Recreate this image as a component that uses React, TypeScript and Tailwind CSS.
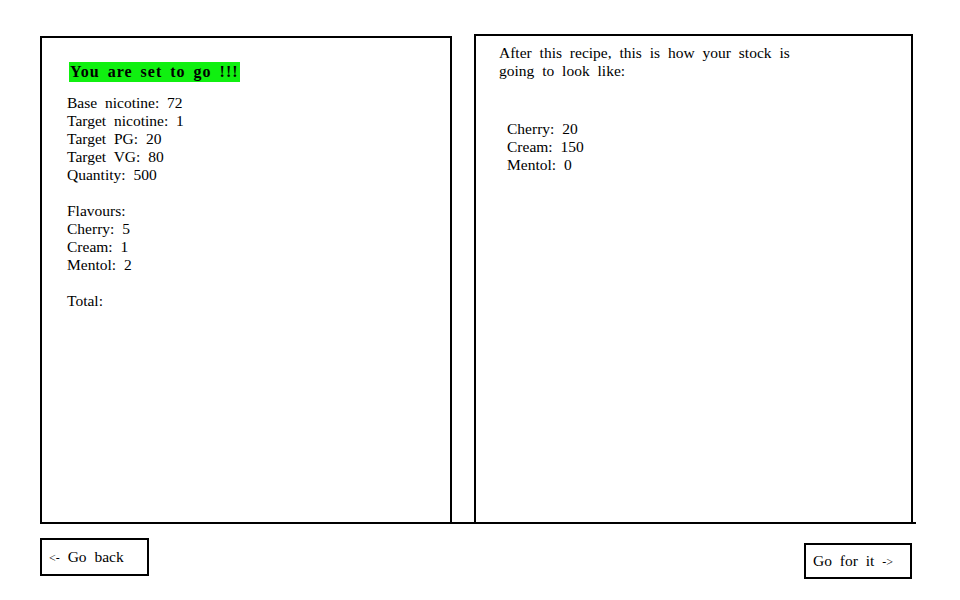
import React from 'react';

const recipe = [
    'Base nicotine: 72',
    'Target nicotine: 1',
    'Target PG: 20',
    'Target VG: 80',
    'Quantity: 500',
];

const flavours = ['Cherry: 5', 'Cream: 1', 'Mentol: 2'];

const stock = ['Cherry: 20', 'Cream: 150', 'Mentol: 0'];

const App: React.FC = () => {
    return (
        <div className="w-[960px] h-[600px] bg-white text-black font-['Liberation_Serif',serif] text-[15.5px] leading-[18px] [word-spacing:4px]">
            {/* Panels */}
            <div className="ml-[40px] mr-[44px] pt-[34px] flex items-end gap-[22px] border-b-2 border-black h-[524px]">
                <div className="w-[412px] h-[486px] border-2 border-b-0 border-black pl-[25px] pt-[24px]">
                    <span className="inline-block ml-[2px] px-[1px] bg-[#10f010] font-bold text-[16px] leading-[20px] tracking-[1px] [word-spacing:3px]">
                        You are set to go !!!
                    </span>
                    <div className="mt-[12px]">
                        {recipe.map((line) => (
                            <p key={line}>{line}</p>
                        ))}
                    </div>
                    <div className="mt-[18px]">
                        <p>Flavours:</p>
                        {flavours.map((line) => (
                            <p key={line}>{line}</p>
                        ))}
                    </div>
                    <p className="mt-[18px]">Total:</p>
                </div>
                <div className="w-[439px] h-[488px] border-2 border-b-0 border-black pl-[23px] pt-[8px]">
                    <p className="w-[300px]">After this recipe, this is how your stock is going to look like:</p>
                    <div className="mt-[40px] pl-[8px]">
                        {stock.map((line) => (
                            <p key={line}>{line}</p>
                        ))}
                    </div>
                </div>
            </div>

            {/* Actions */}
            <div className="ml-[40px] mr-[48px] mt-[14px] flex items-start justify-between">
                <button className="w-[109px] h-[38px] border-2 border-black pl-[7px] text-left font-['Liberation_Serif',serif] text-[15.5px] [word-spacing:4px]">
                    <span className="text-[12px]">&lt;-</span> Go back
                </button>
                <button className="mt-[5px] w-[108px] h-[36px] border-2 border-black pl-[7px] text-left font-['Liberation_Serif',serif] text-[15.5px] [word-spacing:4px]">
                    Go for it <span className="text-[12px]">-&gt;</span>
                </button>
            </div>
        </div>
    );
};

export default App;
